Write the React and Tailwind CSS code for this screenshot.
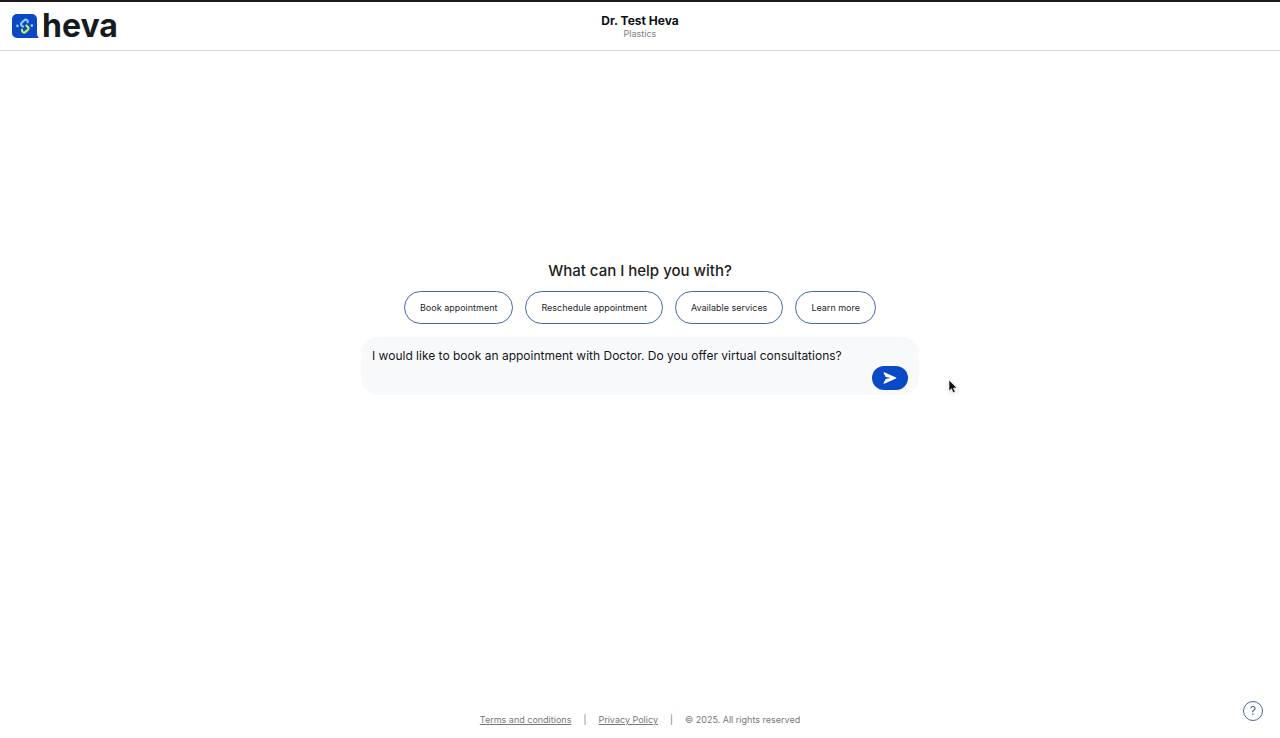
import React, { useState } from 'react';

const suggestions = [
  'Book appointment',
  'Reschedule appointment',
  'Available services',
  'Learn more',
];

const Logo = () => (
  <a href="#" className="flex items-center gap-[3px] text-[#151b1e]">
    <svg width="27" height="26" viewBox="0 0 27 26" fill="none" aria-hidden="true">
      <path d="M5 1H20a5 5 0 0 1 5 5V20c0 2.200.6 3.600 2 4.900H5a5 5 0 0 1-5-5V6a5 5 0 0 1 5-5Z" fill="#0d47c4" />
      <path d="M15.600 9.200c.3-1.300-.4-2.500-1.600-2.600-.8-.1-1.400.3-2 .9L9.700 9.700c-1 1-.9 2 .1 2.900l1.200 1" stroke="#8dc8fa" strokeWidth="2.200" strokeLinecap="round" />
      <path d="M14.400 12.600l1.300 1.200c1 1 1 2 .1 2.900l-2.300 2.200c-.8.800-1.900.8-2.700.1-.7-.6-1-1.300-.8-2.200" stroke="#b9f45c" strokeWidth="2.200" strokeLinecap="round" />
      <circle cx="5.400" cy="12.900" r="1.300" fill="#8dc8fa" />
      <circle cx="19.900" cy="12.600" r="1.300" fill="#a5e0c0" />
    </svg>
    <span className="text-[32px] leading-8 font-bold">heva</span>
  </a>
);

const Header = () => (
  <header className="grid grid-cols-3 items-center h-[51px] px-3 border-t-2 border-t-[#1c1a1b] border-b border-b-[#d5d6d9]">
    <Logo />
    <div className="pt-px text-center">
      <h1 className="text-xs leading-[14px] font-bold text-[#0b0f1a]">Dr. Test Heva</h1>
      <p className="text-[9px] leading-3 text-[#7b7d82]">Plastics</p>
    </div>
  </header>
);

const MessageBox = () => {
  const [message, setMessage] = useState(
    'I would like to book an appointment with Doctor. Do you offer virtual consultations?'
  );

  return (
    <form
      onSubmit={(e) => e.preventDefault()}
      className="flex flex-col w-full max-w-[558px] mt-[13px] px-[11px] pt-[9px] pb-[5px] rounded-[18px] bg-[#f8f9fb]"
    >
      <textarea
        aria-label="Message"
        rows={1}
        value={message}
        onChange={(e) => setMessage(e.target.value)}
        className="w-full h-5 resize-none overflow-hidden bg-transparent text-xs leading-5 text-[#15171a] outline-none"
      />
      <button
        type="submit"
        aria-label="Send"
        className="flex items-center justify-center self-end w-9 h-6 rounded-full bg-[#0b4ac6]"
      >
        <svg width="14" height="14" viewBox="0 0 14 14" fill="#fff" aria-hidden="true">
          <path d="M1.300 1.200L13 6.500c.5.200.5.800 0 1L1.300 12.800c-.5.200-.9-.2-.7-.7L2.700 8l5.100-1L2.700 6 .6 1.900c-.2-.5.200-.9.700-.7Z" />
        </svg>
      </button>
    </form>
  );
};

const Footer = () => (
  <footer className="flex items-center justify-center gap-3 h-9 text-[9px] text-[#75777c]">
    <a href="#terms" className="underline">Terms and conditions</a>
    <span>|</span>
    <a href="#privacy" className="underline">Privacy Policy</a>
    <span>|</span>
    <span>© 2025. All rights reserved</span>
  </footer>
);

const App = () => {
  return (
    <div className="relative flex flex-col min-h-screen bg-white font-['Inter',sans-serif]">
      <Header />
      <main className="flex flex-col flex-1 items-center justify-center px-4 pb-[97px]">
        <h2 className="text-[15px] leading-5 font-medium text-[#1b1d20]">What can I help you with?</h2>
        <div className="flex flex-wrap justify-center gap-3 mt-[10px]">
          {suggestions.map((label) => (
            <button
              key={label}
              type="button"
              className="h-[33px] px-[15px] border border-[#4168a6] rounded-full text-[9px] text-[#24272c]"
            >
              {label}
            </button>
          ))}
        </div>
        <MessageBox />
      </main>
      <Footer />

      <button
        type="button"
        aria-label="Help"
        className="fixed right-[17px] bottom-[17px] flex items-center justify-center w-5 h-5 border border-[#4a659c] rounded-full text-xs text-[#3c5a94]"
      >
        ?
      </button>

      {/* mouse pointer */}
      <svg className="absolute left-[948px] top-[379px] drop-shadow-sm" width="10" height="15" viewBox="0 0 10 15" aria-hidden="true">
        <path d="M1 1v11l2.500-2.300 1.700 4 2-.9-1.700-3.800h3.400Z" fill="#111" stroke="#fff" strokeWidth="0.600" />
      </svg>
    </div>
  );
};

export default App;
